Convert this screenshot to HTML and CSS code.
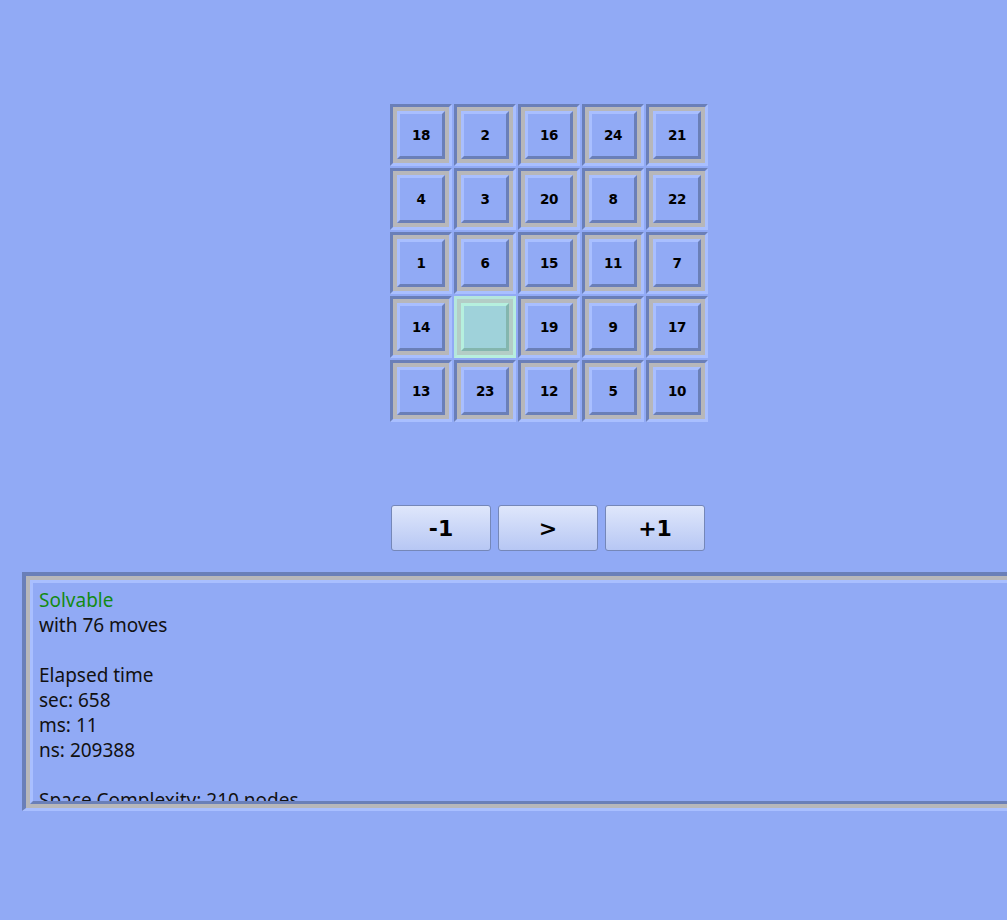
FILE: index.html
```html
<!DOCTYPE html>
<html>
<head>
<meta charset="utf-8">
<link rel="stylesheet" href="styles.css">
</head>
<body>
<div class="page">
  <div class="board">
    <div class="tile"><div class="face">18</div></div>
    <div class="tile"><div class="face">2</div></div>
    <div class="tile"><div class="face">16</div></div>
    <div class="tile"><div class="face">24</div></div>
    <div class="tile"><div class="face">21</div></div>
    <div class="tile"><div class="face">4</div></div>
    <div class="tile"><div class="face">3</div></div>
    <div class="tile"><div class="face">20</div></div>
    <div class="tile"><div class="face">8</div></div>
    <div class="tile"><div class="face">22</div></div>
    <div class="tile"><div class="face">1</div></div>
    <div class="tile"><div class="face">6</div></div>
    <div class="tile"><div class="face">15</div></div>
    <div class="tile"><div class="face">11</div></div>
    <div class="tile"><div class="face">7</div></div>
    <div class="tile"><div class="face">14</div></div>
    <div class="tile blank"><div class="face"></div></div>
    <div class="tile"><div class="face">19</div></div>
    <div class="tile"><div class="face">9</div></div>
    <div class="tile"><div class="face">17</div></div>
    <div class="tile"><div class="face">13</div></div>
    <div class="tile"><div class="face">23</div></div>
    <div class="tile"><div class="face">12</div></div>
    <div class="tile"><div class="face">5</div></div>
    <div class="tile"><div class="face">10</div></div>
  </div>
  <div class="controls">
    <button class="btn">-1</button>
    <button class="btn">&gt;</button>
    <button class="btn">+1</button>
  </div>
  <div class="panel">
    <div class="panel-inner">
      <div class="log">
        <div class="ok">Solvable</div>
        <div>with 76 moves</div>
        <div class="empty"></div>
        <div>Elapsed time</div>
        <div>sec: 658</div>
        <div>ms: 11</div>
        <div>ns: 209388</div>
        <div class="empty"></div>
        <div>Space Complexity: 210 nodes</div>
      </div>
    </div>
  </div>
</div>
</body>
</html>
```

FILE: styles.css
```css
html, body {
  margin: 0;
  padding: 0;
  overflow: hidden;
}
body {
  background: #91aaf5;
  width: 1007px;
  height: 920px;
  font-family: "Noto Sans", "DejaVu Sans", sans-serif;
}
.page {
  display: flex;
  flex-direction: column;
  padding-top: 104px;
}
.board {
  margin-left: 390px;
  display: grid;
  grid-template-columns: repeat(5, 62px);
  grid-auto-rows: 62px;
  gap: 2px;
  width: max-content;
}
.tile {
  box-sizing: border-box;
  border-style: solid;
  border-width: 3px;
  border-color: #6a7fb8 #a9bfff #a9bfff #6a7fb8;
  background: #b7b7ba;
  padding: 4px;
}
.face {
  box-sizing: border-box;
  height: 100%;
  border-style: solid;
  border-width: 3px;
  border-color: #a9bfff #6a7fb8 #6a7fb8 #a9bfff;
  background: #91aaf5;
  display: flex;
  align-items: center;
  justify-content: center;
  font-family: "DejaVu Sans", sans-serif;
  font-weight: bold;
  font-size: 13.5px;
  letter-spacing: -0.5px;
  color: #000;
}
.tile.blank {
  border-color: #b4e6dc #b8eede #b8eede #b4e6dc;
  background: #b3cdc6;
}
.tile.blank .face {
  border-color: #b6f0de #84b6ae #84b6ae #b6f0de;
  background: #9fd2da;
}
.controls {
  margin-top: 83px;
  margin-left: 391px;
  display: flex;
  gap: 7px;
}
.btn {
  width: 100px;
  height: 46px;
  box-sizing: border-box;
  border: 1px solid #7587b8;
  border-radius: 3px;
  background: linear-gradient(#dfe7fb, #b7c7f4);
  font-family: "DejaVu Sans", sans-serif;
  font-weight: bold;
  font-size: 22px;
  color: #000;
  padding: 0;
}
.panel {
  margin-top: 21px;
  margin-left: 22px;
  width: 1000px;
  height: 239px;
  box-sizing: border-box;
  border-style: solid;
  border-width: 4px 3px 3px 4px;
  border-color: #6a7fb8 #a9bfff #a9bfff #6a7fb8;
  background: #b7b7ba;
  padding: 4px;
  flex-shrink: 0;
}
.panel-inner {
  box-sizing: border-box;
  height: 100%;
  border-style: solid;
  border-width: 3px;
  border-color: #a9bfff #6a7fb8 #6a7fb8 #a9bfff;
  background: #91aaf5;
  overflow: hidden;
  padding: 5px 6px 0;
}
.log {
  font-size: 19px;
  line-height: 25px;
  color: #111;
}
.log .ok {
  color: #138a13;
}
.log .empty {
  height: 25px;
}
```
